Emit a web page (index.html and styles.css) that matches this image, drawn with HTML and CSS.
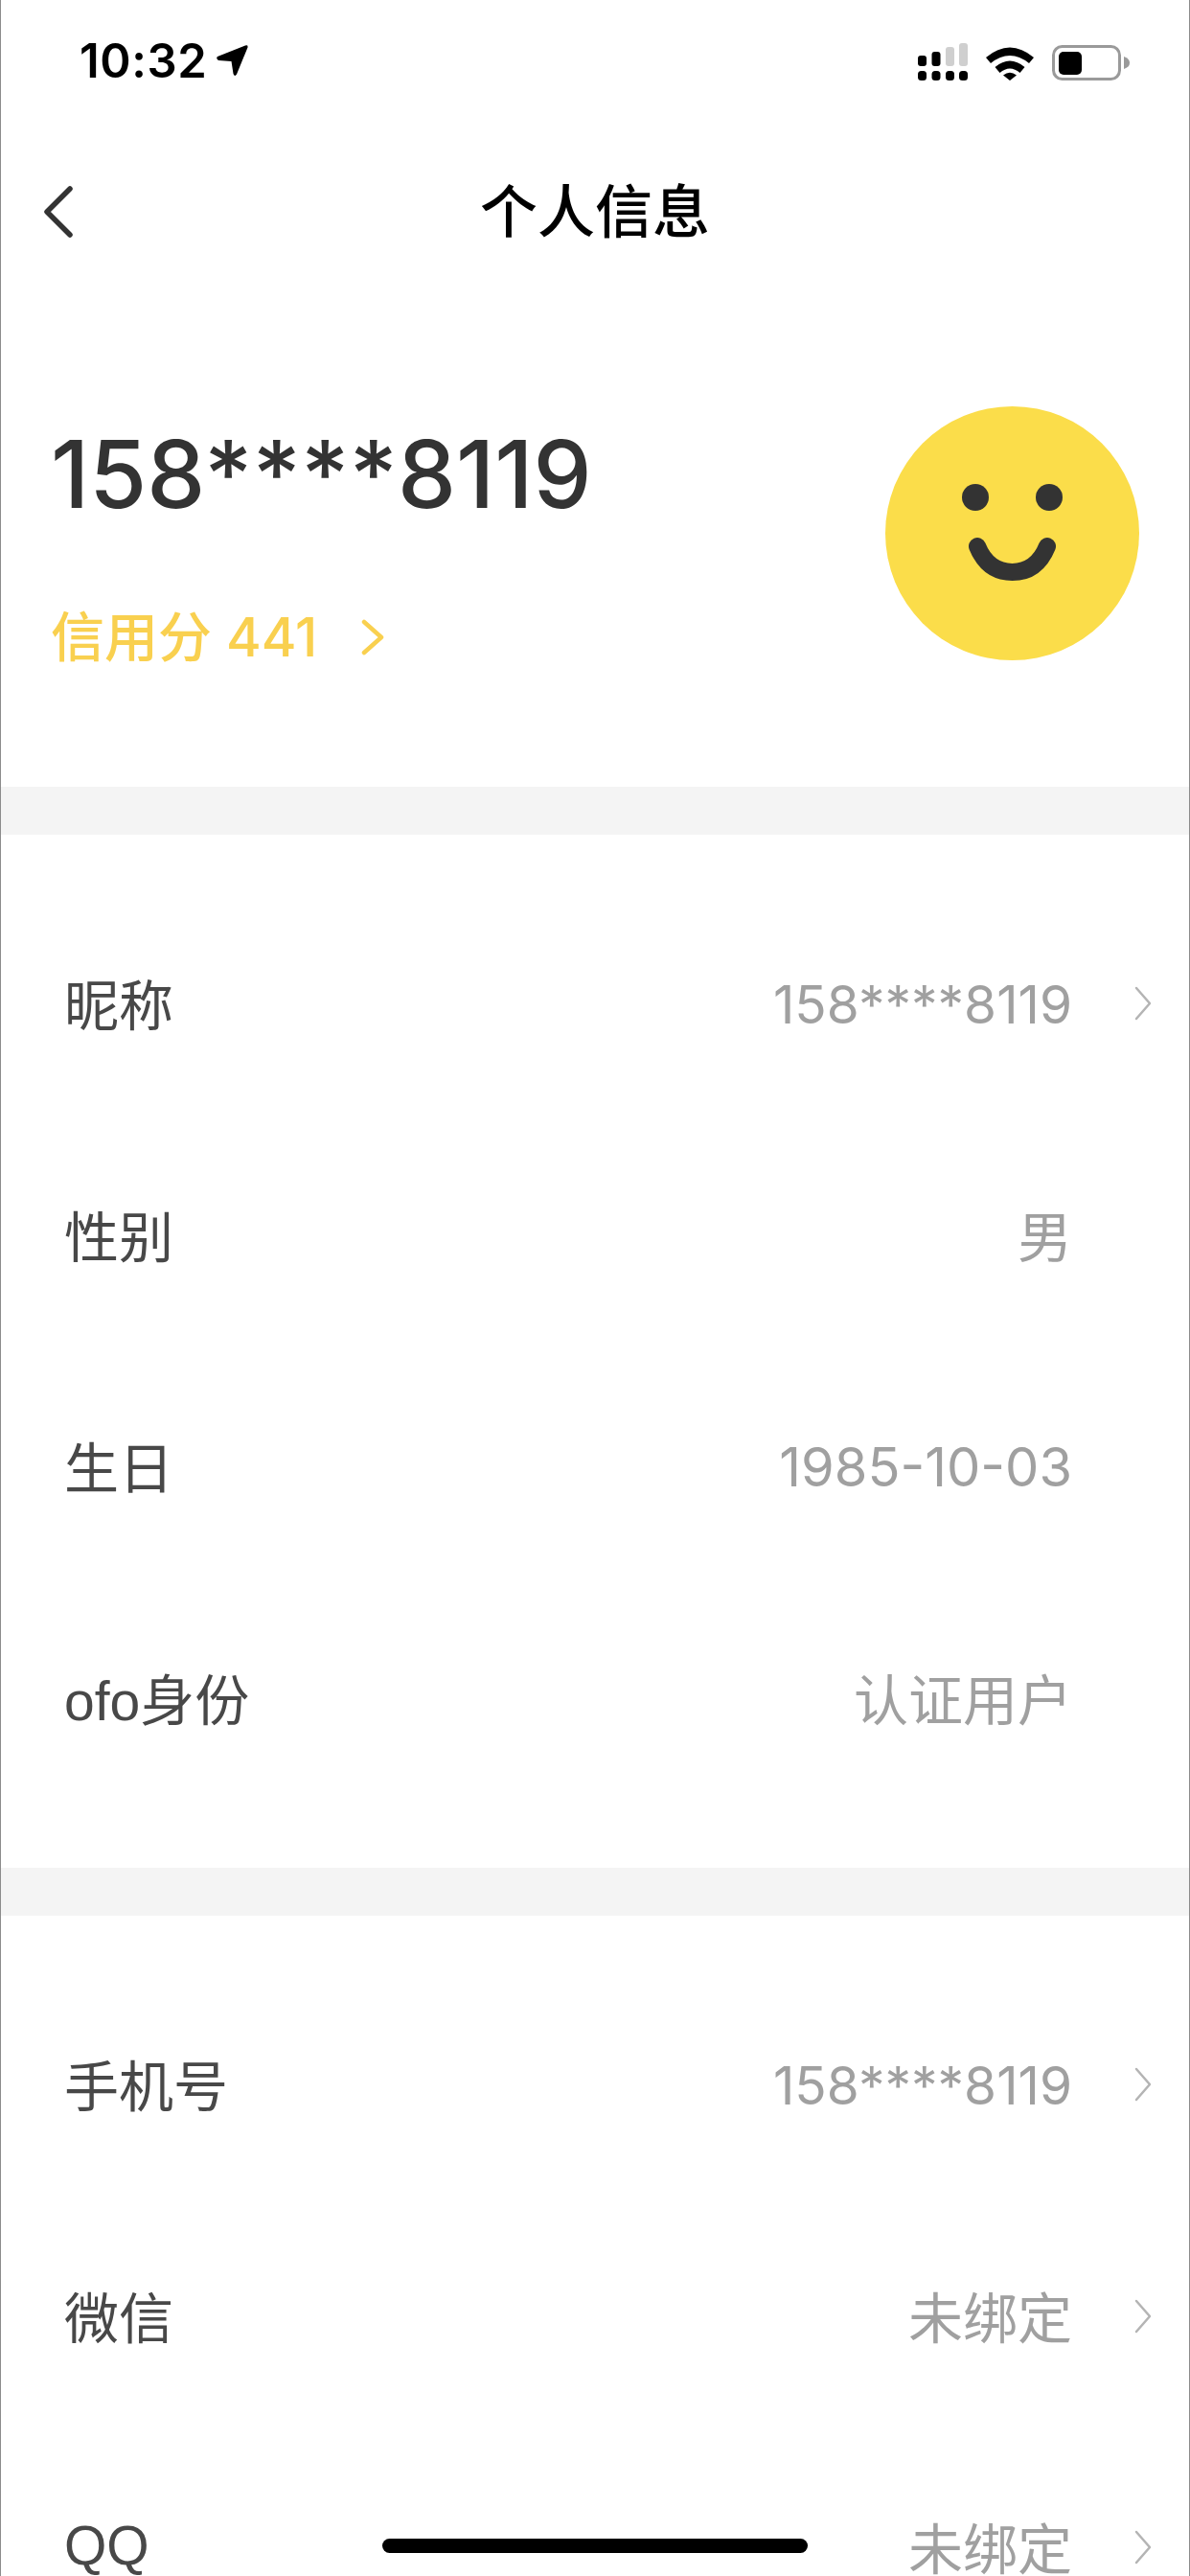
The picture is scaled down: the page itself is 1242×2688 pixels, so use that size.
FILE: index.html
```html
<!DOCTYPE html>
<html lang="zh-CN">
<head>
<meta charset="utf-8">
<title>个人信息</title>
<link rel="stylesheet" href="styles.css">
</head>
<body>
<div class="screen">
  <header class="status">
    <div class="status-left">
      <span class="time">10:32</span>
      <svg class="loc" width="34" height="34" viewBox="0 0 34 34"><path d="M1 12 L30 .5 Q33 -.5 32.500 2.500 L21 30.500 Q19 33.500 17.500 30 L15.500 17 L2 16 Q-1 14 1 12Z" fill="#000"/></svg>
    </div>
    <div class="status-right">
      <svg width="52" height="39" viewBox="0 0 52 39"><g fill="#000"><rect x="0" y="13" width="9" height="11" rx="3"/><rect x="14.500" y="9" width="9" height="15" rx="3"/><rect x="0" y="29" width="9" height="10" rx="3.500"/><rect x="14.500" y="29" width="9" height="10" rx="3.500"/><rect x="29" y="29" width="9" height="10" rx="3.500"/><rect x="43" y="29" width="9" height="10" rx="3.500"/></g><g fill="#cfcfcf"><rect x="29" y="4" width="9" height="20" rx="3"/><rect x="43" y="0" width="9" height="24" rx="3"/></g></svg>
      <svg class="wifi" width="50" height="37" viewBox="0 0 50 37"><path d="M0 13 Q25 -8 50 13 L45 19 Q25 3 5 19Z M9.500 23 Q25 10 40.500 23 L35.500 29 Q25 20 14.500 29Z M18 31.500 Q25 26 32 31.500 L25 37Z" fill="#000"/></svg>
      <svg width="81" height="37" viewBox="0 0 81 37"><rect x="1.500" y="1.500" width="69" height="34" rx="9" fill="none" stroke="#9a9a9a" stroke-width="3"/><rect x="7" y="7" width="24" height="24" rx="5" fill="#000"/><path d="M75 12 Q81 14 81 18.500 Q81 23 75 25Z" fill="#9a9a9a"/></svg>
    </div>
  </header>
  <nav class="nav">
    <svg class="back" width="32" height="54" viewBox="0 0 32 54"><path d="M28 3 L4 27 L28 51" fill="none" stroke="#333" stroke-width="5.500" stroke-linecap="round" stroke-linejoin="round"/></svg>
    <h1 class="title">个人信息</h1>
  </nav>
  <section class="profile">
    <div class="who">
      <div class="phone">158****8119</div>
      <div class="credit">
        <span>信用分 441</span>
        <svg width="24" height="38" viewBox="0 0 24 38"><path d="M3 3 L21 19 L3 35" fill="none" stroke="#f9d04f" stroke-width="4.500" stroke-linecap="round" stroke-linejoin="round"/></svg>
      </div>
    </div>
    <svg class="avatar" width="265" height="265" viewBox="0 0 265 265">
      <circle cx="132.500" cy="132.500" r="132.500" fill="#fbdd4a"/>
      <circle cx="94" cy="95" r="14" fill="#333"/>
      <circle cx="171" cy="95" r="14" fill="#333"/>
      <path d="M96 146 Q107 173 132.500 173 Q158 173 169 146" fill="none" stroke="#333" stroke-width="18" stroke-linecap="round"/>
    </svg>
  </section>
  <section class="group">
    <div class="row"><span class="label">昵称</span><span class="value num masked">158****8119</span><svg class="chev" width="20" height="36" viewBox="0 0 20 36"><path d="M3 2 L17 18 L3 34" fill="none" stroke="#b4b4b4" stroke-width="2.500" stroke-linecap="round" stroke-linejoin="round"/></svg></div>
    <div class="row"><span class="label">性别</span><span class="value">男</span><span class="chev-space"></span></div>
    <div class="row"><span class="label">生日</span><span class="value num">1985-10-03</span><span class="chev-space"></span></div>
    <div class="row"><span class="label">ofo身份</span><span class="value">认证用户</span><span class="chev-space"></span></div>
  </section>
  <section class="group">
    <div class="row"><span class="label">手机号</span><span class="value num masked">158****8119</span><svg class="chev" width="20" height="36" viewBox="0 0 20 36"><path d="M3 2 L17 18 L3 34" fill="none" stroke="#b4b4b4" stroke-width="2.500" stroke-linecap="round" stroke-linejoin="round"/></svg></div>
    <div class="row"><span class="label">微信</span><span class="value">未绑定</span><svg class="chev" width="20" height="36" viewBox="0 0 20 36"><path d="M3 2 L17 18 L3 34" fill="none" stroke="#b4b4b4" stroke-width="2.500" stroke-linecap="round" stroke-linejoin="round"/></svg></div>
    <div class="row"><span class="label">QQ</span><span class="value">未绑定</span><svg class="chev" width="20" height="36" viewBox="0 0 20 36"><path d="M3 2 L17 18 L3 34" fill="none" stroke="#b4b4b4" stroke-width="2.500" stroke-linecap="round" stroke-linejoin="round"/></svg></div>
  </section>
  <div class="home"></div>
</div>
</body>
</html>
```
FILE: styles.css
```css
* { box-sizing: border-box; }
html, body { margin: 0; padding: 0; background: #fff; }
body { font-family: Inter, "Noto Sans CJK SC", sans-serif; }
.screen {
  position: relative;
  width: 1242px;
  height: 2688px;
  overflow: hidden;
  background: #fff;
  border-left: 1px solid #8c8c8c;
  border-right: 1px solid #8c8c8c;
}
.status {
  height: 100px;
  display: flex;
  justify-content: space-between;
  align-items: flex-start;
  padding: 45px 62px 0 82px;
}
.status-left { display: flex; align-items: center; gap: 10px; margin-top: -3px; }
.time { font-family: Inter, sans-serif; font-weight: 600; font-size: 49px; line-height: 44px; color: #000; letter-spacing: .6px; }
.status-right { display: flex; align-items: flex-start; gap: 19px; }
.wifi { margin-top: 2px; }
.status-right svg:last-child { margin-top: 2px; }
.nav {
  position: relative;
  height: 234px;
  display: flex;
  align-items: center;
  justify-content: center;
}
.nav .back { position: absolute; left: 44px; top: 94px; }
.title { margin: 0; font-family: "Noto Sans CJK SC", sans-serif; font-weight: 500; font-size: 60px; line-height: 78px; color: #000; }
.profile {
  height: 487px;
  display: flex;
  justify-content: space-between;
  align-items: flex-start;
  padding: 90px 52px 0 52px;
}
.who { display: flex; flex-direction: column; padding-top: 26px; }
.phone { font-size: 97px; line-height: 90px; font-weight: 500; color: #333; }
.credit { margin-top: 90px; display: flex; align-items: center; gap: 46px; color: #f9d04f; font-size: 56px; line-height: 70px; font-weight: 500; }
.avatar { display: block; }
.group {
  border-top: 50px solid #f4f4f4;
  padding: 56px 0;
}
.row {
  height: 241.500px;
  display: flex;
  align-items: center;
  padding: 0 38px 5px 66px;
  font-size: 57px;
}
.label { font-family: "Liberation Sans", "Noto Sans CJK SC", sans-serif; color: #484848; flex: 1; }
.value { color: #a0a0a0; }
.num { margin-top: 6px; font-size: 56px; }
.masked { font-size: 55px; }
.chev { margin-left: 64px; margin-top: 4px; display: block; }
.chev-space { width: 20px; margin-left: 64px; }
.home {
  position: absolute;
  left: 398px;
  top: 2649px;
  width: 444px;
  height: 15px;
  border-radius: 8px;
  background: #000;
}
```
